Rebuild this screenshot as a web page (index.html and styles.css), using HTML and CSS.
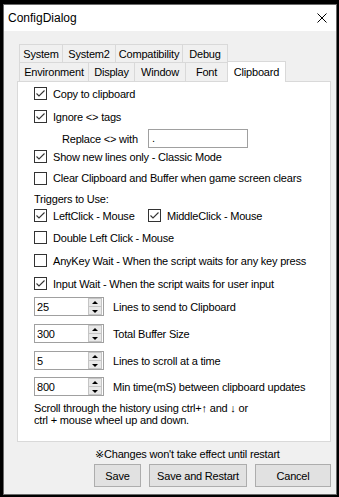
FILE: index.html
```html
<!DOCTYPE html>
<html>
<head>
<meta charset="utf-8">
<link rel="stylesheet" href="styles.css">
</head>
<body>
<div class="window">
  <div class="titlebar">
    <span class="title">ConfigDialog</span>
    <svg class="close" width="10" height="10" viewBox="0 0 10 10"><path d="M0.5 0.5L9.5 9.5M9.5 0.5L0.5 9.5" stroke="#000" stroke-width="1" fill="none"/></svg>
  </div>
  <div class="main">
    <div class="tabs">
      <div class="tab-row row-top">
        <div class="tab t-system">System</div>
        <div class="tab t-system2">System2</div>
        <div class="tab t-compat">Compatibility</div>
        <div class="tab t-debug">Debug</div>
      </div>
      <div class="tab-row row-bottom">
        <div class="tab t-env">Environment</div>
        <div class="tab t-display">Display</div>
        <div class="tab t-window">Window</div>
        <div class="tab t-font">Font</div>
        <div class="tab t-clip selected">Clipboard</div>
      </div>
    </div>
    <div class="panel">
      <div class="row h23"><span class="cb checked"><svg viewBox="0 0 11 11"><path d="M1.5 5.5L4 8L9.5 2.5" /></svg></span><span>Copy to clipboard</span></div>
      <div class="row h23"><span class="cb checked"><svg viewBox="0 0 11 11"><path d="M1.5 5.5L4 8L9.5 2.5" /></svg></span><span>Ignore &lt;&gt; tags</span></div>
      <div class="row h21 indent"><span class="replace-label">Replace &lt;&gt; with</span><span class="textbox">.</span></div>
      <div class="row h15"><span class="cb checked"><svg viewBox="0 0 11 11"><path d="M1.5 5.5L4 8L9.5 2.5" /></svg></span><span>Show new lines only - Classic Mode</span></div>
      <div class="row h28"><span class="cb"></span><span>Clear Clipboard and Buffer when game screen clears</span></div>
      <div class="row h13"><span>Triggers to Use:</span></div>
      <div class="row h21">
        <span class="pair"><span class="cb checked"><svg viewBox="0 0 11 11"><path d="M1.5 5.5L4 8L9.5 2.5" /></svg></span><span>LeftClick - Mouse</span></span>
        <span class="cb checked"><svg viewBox="0 0 11 11"><path d="M1.5 5.5L4 8L9.5 2.5" /></svg></span><span>MiddleClick - Mouse</span>
      </div>
      <div class="row h23"><span class="cb"></span><span>Double Left Click - Mouse</span></div>
      <div class="row h23"><span class="cb"></span><span>AnyKey Wait - When the script waits for any key press</span></div>
      <div class="row h23"><span class="cb checked"><svg viewBox="0 0 11 11"><path d="M1.5 5.5L4 8L9.5 2.5" /></svg></span><span>Input Wait - When the script waits for user input</span></div>
      <div class="spinrow first">
        <div class="spin"><span class="spin-val">25</span><span class="spin-btns"><span class="sb up"></span><span class="sb down"></span></span></div>
        <span>Lines to send to Clipboard</span>
      </div>
      <div class="spinrow">
        <div class="spin"><span class="spin-val">300</span><span class="spin-btns"><span class="sb up"></span><span class="sb down"></span></span></div>
        <span>Total Buffer Size</span>
      </div>
      <div class="spinrow">
        <div class="spin"><span class="spin-val">5</span><span class="spin-btns"><span class="sb up"></span><span class="sb down"></span></span></div>
        <span>Lines to scroll at a time</span>
      </div>
      <div class="spinrow last">
        <div class="spin"><span class="spin-val">800</span><span class="spin-btns"><span class="sb up"></span><span class="sb down"></span></span></div>
        <span>Min time(mS) between clipboard updates</span>
      </div>
      <div class="help">Scroll through the history using ctrl+↑ and ↓ or<br>ctrl + mouse wheel up and down.</div>
    </div>
    <div class="footer">
      <div class="footer-inner">
        <div class="note">※Changes won't take effect until restart</div>
        <div class="buttons">
          <button class="btn b-save">Save</button>
          <button class="btn b-restart">Save and Restart</button>
          <button class="btn b-cancel">Cancel</button>
        </div>
      </div>
    </div>
  </div>
</div>
</body>
</html>
```
FILE: styles.css
```css
html, body {
  margin: 0;
  padding: 0;
  background: #000;
}
body {
  font-family: "Liberation Sans", Arial, "DejaVu Sans", sans-serif;
  font-size: 11px;
  color: #000;
}
.window {
  margin: 4px 0 0 3px;
  width: 334px;
  height: 491px;
  box-sizing: border-box;
  border: 1px solid #6b6b6b;
  background: #f0f0f0;
  display: flex;
  flex-direction: column;
}
.titlebar {
  height: 26px;
  background: #fff;
  display: flex;
  align-items: center;
  justify-content: space-between;
  padding: 0 9px 0 4px;
}
.title {
  font-size: 12px;
}
.close {
  display: block;
}
.main {
  padding: 13px 5px 0 13px;
}
.tabs {
  padding-left: 2px;
}
.tab-row {
  display: flex;
}
.row-top {
  height: 18px;
}
.row-bottom {
  height: 19px;
}
.tab {
  box-sizing: border-box;
  border: 1px solid #d9d9d9;
  border-bottom: none;
  margin-left: -1px;
  background: #f0f0f0;
  display: flex;
  align-items: center;
  justify-content: center;
  letter-spacing: -0.2px;
}
.tab:first-child {
  margin-left: 0;
}
.row-top .tab { height: 18px; }
.row-bottom .tab { height: 19px; }
.t-system { width: 44px; }
.t-system2 { width: 54px; }
.t-compat { width: 68px; }
.t-debug { width: 46px; }
.t-env { width: 70px; }
.t-display { width: 47px; }
.t-window { width: 52px; }
.t-font { width: 43px; }
.t-clip { width: 59px; }
.row-bottom .tab.selected {
  height: 21px;
  margin-top: -1px;
  background: #fff;
  position: relative;
  z-index: 1;
  padding-bottom: 1px;
}
.panel {
  box-sizing: border-box;
  width: 314px;
  height: 361px;
  border: 1px solid #d9d9d9;
  background: #fff;
  padding: 0 0 0 16px;
  letter-spacing: -0.2px;
}
.row {
  display: flex;
  align-items: center;
  white-space: nowrap;
}
.h23 { height: 23px; }
.h21 { height: 21px; }
.h15 { height: 15px; }
.h28 { height: 28px; }
.h13 { height: 13px; }
.cb {
  box-sizing: border-box;
  width: 13px;
  height: 13px;
  border: 1px solid #333;
  background: #fff;
  margin-right: 6px;
  flex: none;
  display: flex;
}
.cb svg {
  width: 11px;
  height: 11px;
}
.cb svg path {
  fill: none;
  stroke: #333;
  stroke-width: 1.1;
}
.pair {
  display: flex;
  align-items: center;
  width: 114px;
  flex: none;
}
.indent {
  padding-left: 28px;
}
.replace-label {
  width: 86px;
}
.textbox {
  box-sizing: border-box;
  width: 100px;
  height: 19px;
  border: 1px solid #a0a0a0;
  background: #fff;
  padding-left: 3px;
  line-height: 17px;
}
.spinrow {
  display: flex;
  align-items: center;
  height: 19px;
  margin-top: 8px;
  white-space: nowrap;
}
.spinrow.first { margin-top: 2px; }
.spinrow.last { margin-top: 7px; }
.spin {
  box-sizing: border-box;
  width: 70px;
  height: 19px;
  border: 1px solid #a0a0a0;
  background: #fff;
  display: flex;
  align-items: center;
  justify-content: space-between;
  margin-right: 9px;
  flex: none;
}
.spin-val {
  padding-left: 2px;
}
.spin-btns {
  display: flex;
  flex-direction: column;
  width: 14px;
  height: 17px;
  margin-right: 1px;
}
.sb {
  flex: 1;
  box-sizing: border-box;
  border: 1px solid #c4c4c4;
  background: #e8e8e8;
  position: relative;
}
.sb.down {
  border-top: none;
}
.sb.up::after, .sb.down::after {
  content: "";
  position: absolute;
  left: 50%;
  top: 50%;
  margin-left: -3px;
  border-left: 3px solid transparent;
  border-right: 3px solid transparent;
}
.sb.up::after {
  margin-top: -2px;
  border-bottom: 3px solid #000;
}
.sb.down::after {
  margin-top: -1px;
  border-top: 3px solid #000;
}
.help {
  margin-top: 6px;
  line-height: 12px;
  white-space: nowrap;
}
.footer {
  display: flex;
  justify-content: flex-end;
}
.footer-inner {
  width: 237px;
}
.note {
  margin-top: 6px;
  height: 13px;
  line-height: 13px;
  padding-left: 1px;
  letter-spacing: -0.2px;
  white-space: nowrap;
}
.buttons {
  display: flex;
  gap: 8px;
  margin-top: 3px;
}
.btn {
  box-sizing: border-box;
  height: 23px;
  border: 1px solid #adadad;
  background: #e1e1e1;
  font-family: "Liberation Sans", Arial, sans-serif;
  font-size: 11px;
  letter-spacing: -0.2px;
  color: #000;
  padding: 0;
  margin: 0;
}
.b-save { width: 47px; }
.b-restart { width: 98px; }
.b-cancel { width: 76px; }
```
